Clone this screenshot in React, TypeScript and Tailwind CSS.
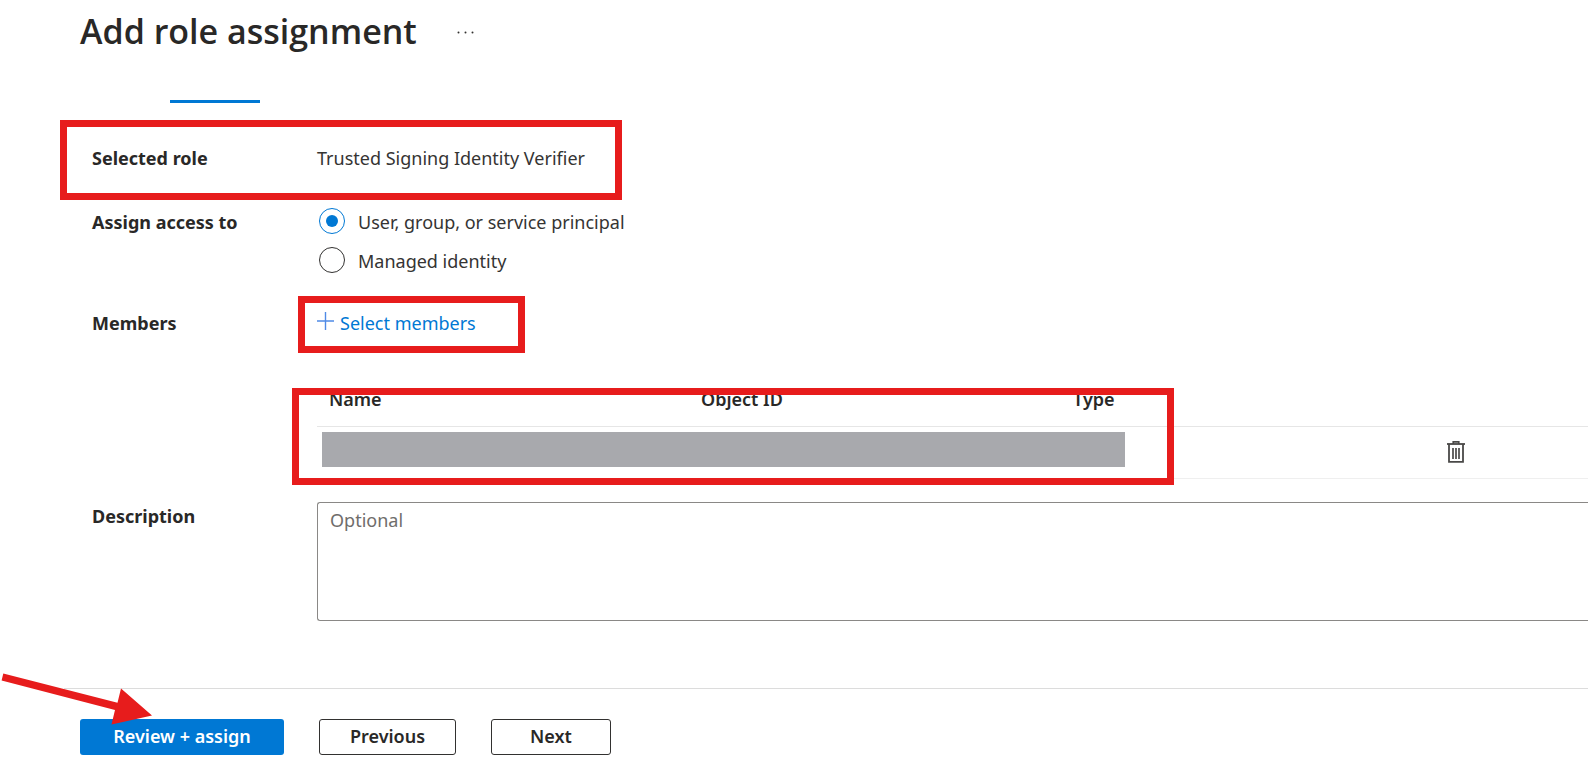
import { useState, type ReactNode } from "react";

const RED_FRAME = "pointer-events-none absolute border-[7px] border-[#e71c1c]";

function Row({ label, htmlFor, className, children }: { label: string; htmlFor?: string; className: string; children: ReactNode }) {
  const labelClass = "w-[225px] shrink-0 font-bold leading-7";
  return (
    <div className={`relative flex items-start pl-[92px] ${className}`}>
      {htmlFor ? (
        <label htmlFor={htmlFor} className={labelClass}>{label}</label>
      ) : (
        <div className={labelClass}>{label}</div>
      )}
      <div className="min-w-0 flex-1">{children}</div>
    </div>
  );
}

function TrashIcon() {
  return (
    <svg width="18" height="22" viewBox="0 0 18 22" fill="none" stroke="#4a4948" aria-hidden="true">
      <path d="M0 3h18" stroke="#323130" strokeWidth="1.6" />
      <path d="M6.2 3V.9h5.6V3" strokeWidth="1.6" />
      <path d="M2 3v17.8h14V3" strokeWidth="1.8" />
      <path d="M6 7v11M9 7v11M12 7v11" strokeWidth="1.7" />
    </svg>
  );
}

export default function App() {
  const [target, setTarget] = useState("user");
  const options = [
    { id: "user", label: "User, group, or service principal" },
    { id: "managed", label: "Managed identity" },
  ];
  return (
    <main className="relative flex min-h-screen flex-col overflow-hidden bg-white font-['Noto_Sans','Open_Sans',sans-serif] text-[18px] leading-7 text-[#292827]">
      <header className="flex items-center gap-10 pl-20 pt-[7px]">
        <h1 className="font-['Open_Sans','Noto_Sans',sans-serif] text-[34px] font-semibold leading-12">Add role assignment</h1>
        <button type="button" aria-label="More actions" className="flex h-6 items-end pb-2">
          <svg width="18" height="4" viewBox="0 0 18 4" fill="#323130" aria-hidden="true">
            <circle cx="1.5" cy="1.5" r="1" />
            <circle cx="8.5" cy="1.5" r="1" />
            <circle cx="15.5" cy="1.5" r="1" />
          </svg>
        </button>
      </header>

      <div className="mt-[45px] ml-[170px] h-[3px] w-[90px] bg-[#0078d4]" />

      <Row label="Selected role" className="mt-[41px]">
        <span className="text-[#353433]">Trusted Signing Identity Verifier</span>
        <div className={`${RED_FRAME} left-[60px] -top-6 h-[80px] w-[562px]`} />
      </Row>

      <Row label="Assign access to" className="mt-9">
        <div role="radiogroup" aria-label="Assign access to" className="flex flex-col gap-[11px] pl-0.5 text-[#353433]">
          {options.map((o) => (
            <label key={o.id} className="flex items-start gap-[13px]">
              <input
                type="radio"
                name="target"
                checked={target === o.id}
                onChange={() => setTarget(o.id)}
                className="size-[26px] appearance-none rounded-full border border-[#323130] bg-white bg-clip-content p-[6px] checked:border-[#0078d4] checked:bg-[#0078d4]"
              />
              <span>{o.label}</span>
            </label>
          ))}
        </div>
      </Row>

      <Row label="Members" className="mt-[34px]">
        <button type="button" className="flex items-start gap-[6px] text-[#0078d4]">
          <svg className="mt-[3px]" width="17" height="18" viewBox="0 0 17 18" stroke="#4f8ae6" strokeWidth="1.4" aria-hidden="true">
            <path d="M8.5 0v18M0 9h17" />
          </svg>
          Select members
        </button>
        <table className="mt-12 w-full table-fixed border-collapse text-left">
          <thead>
            <tr className="h-[41px] border-b border-[#e6e6e6] align-top">
              <th className="w-[372px] pl-3 font-semibold">Name</th>
              <th className="w-[372px] pl-3 font-semibold">Object ID</th>
              <th className="w-[372px] pl-3 font-semibold">Type</th>
              <th aria-label="Actions" />
            </tr>
          </thead>
          <tbody>
            <tr className="h-[52px] border-b border-[#efefef]">
              <td colSpan={3} className="pl-[5px] align-top">
                <div className="mt-[5px] h-[35px] w-[803px] bg-[#a8a9ad]" />
              </td>
              <td className="pl-[14px]">
                <button type="button" aria-label="Remove member" className="block">
                  <TrashIcon />
                </button>
              </td>
            </tr>
          </tbody>
        </table>
        <div className={`${RED_FRAME} left-[298px] -top-[13px] h-[57px] w-[227px]`} />
        <div className={`${RED_FRAME} left-[292px] top-[79px] h-[97px] w-[882px]`} />
      </Row>

      <Row label="Description" htmlFor="description" className="mt-[23px]">
        <textarea
          id="description"
          placeholder="Optional"
          className="block h-[119px] w-full resize-none rounded-l-[3px] border border-r-0 border-[#8a8886] px-3 py-[3px] placeholder:text-[#6f6d6b]"
        />
      </Row>

      <footer className="relative mt-[67px] ml-16 border-t border-[#dcdcdc] pt-[30px] pl-4">
        <div className="flex gap-[35px] font-semibold">
          <button type="button" className="h-9 w-[204px] rounded-[3px] bg-[#0078d4] pb-0.5 text-white">Review + assign</button>
          <button type="button" className="h-9 w-[137px] rounded-[3px] border border-[#323130] pb-0.5">Previous</button>
          <button type="button" className="h-9 w-[120px] rounded-[3px] border border-[#323130] pb-0.5">Next</button>
        </div>
        <svg className="pointer-events-none absolute -left-16 -top-[17px]" width="154" height="54" viewBox="0 0 154 54" aria-hidden="true">
          <path d="M3.3 1.4 117.5 30.8 121 16.5 152 43.5 111.5 52.5 115 38 1.6 8.5Z" fill="#e71c1c" />
        </svg>
      </footer>
    </main>
  );
}
